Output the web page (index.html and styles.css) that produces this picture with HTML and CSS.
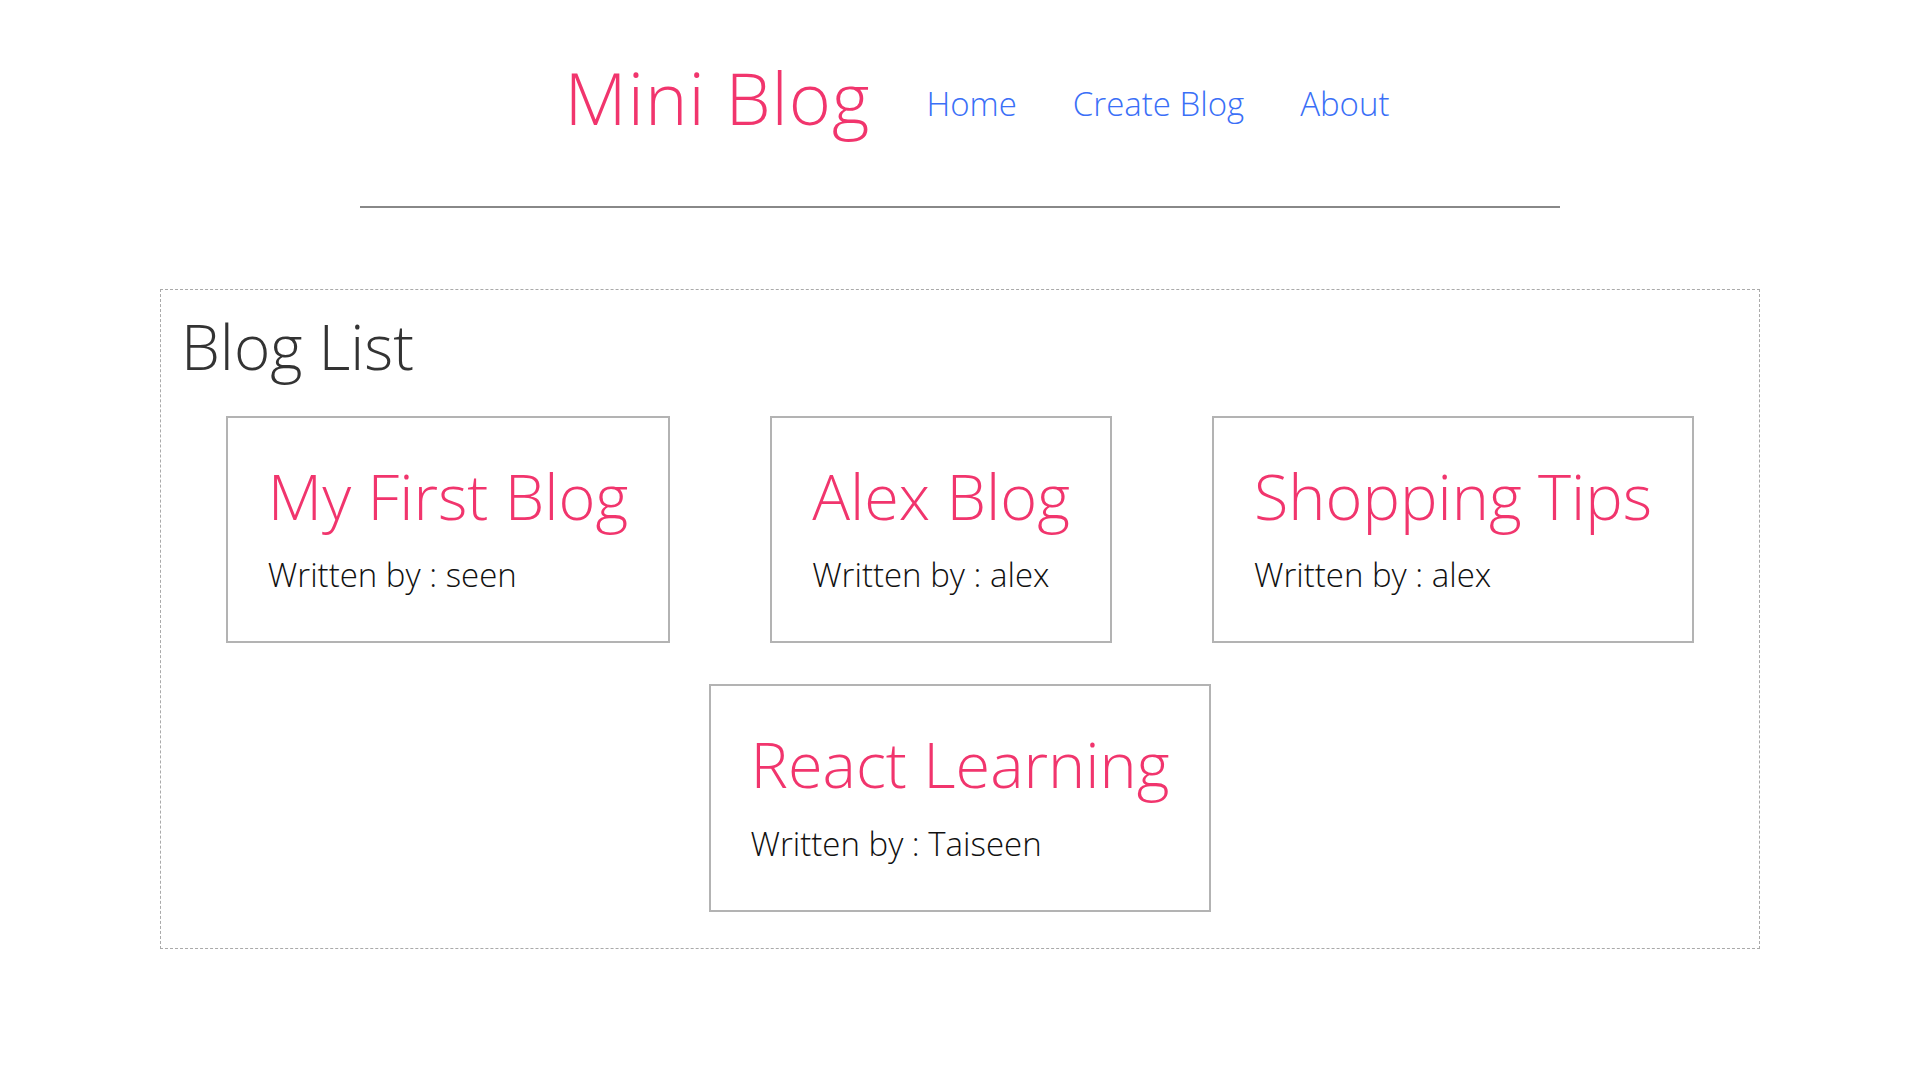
FILE: index.html
```html
<!DOCTYPE html>
<html lang="en">
<head>
<meta charset="utf-8">
<title>Mini Blog</title>
<link rel="stylesheet" href="styles.css">
</head>
<body>
  <nav class="navbar">
    <h1 class="brand">Mini Blog</h1>
    <div class="links">
      <a href="#">Home</a>
      <a href="#">Create Blog</a>
      <a href="#">About</a>
    </div>
  </nav>
  <main class="content">
    <h2 class="list-title">Blog List</h2>
    <div class="blog-grid">
      <div class="blog-preview">
        <h2>My First Blog</h2>
        <p>Written by : seen</p>
      </div>
      <div class="blog-preview">
        <h2>Alex Blog</h2>
        <p>Written by : alex</p>
      </div>
      <div class="blog-preview">
        <h2>Shopping Tips</h2>
        <p>Written by : alex</p>
      </div>
      <div class="blog-preview">
        <h2>React Learning</h2>
        <p>Written by : Taiseen</p>
      </div>
    </div>
  </main>
</body>
</html>
```
FILE: styles.css
```css
* {
  margin: 0;
  box-sizing: border-box;
}

body {
  margin: 0;
  font-family: "Open Sans", "Lato", sans-serif;
  font-weight: 300;
  color: #333;
  background: #fff;
}

.navbar {
  width: 1200px;
  height: 208px;
  margin: 0 auto;
  padding-left: 34px;
  display: flex;
  justify-content: center;
  align-items: center;
  border-bottom: 2px solid #888;
}

.brand {
  font-size: 72px;
  font-weight: 300;
  letter-spacing: 1px;
  color: #f1356d;
  margin-top: -12px;
}

.links {
  display: flex;
  gap: 56px;
  margin-left: 56px;
}

.links a {
  font-size: 33px;
  color: #3a6ff7;
  text-decoration: none;
}

.content {
  width: 1600px;
  margin: 81px auto 0;
  border: 1px dashed #aaa;
  padding: 18px 0 36px;
}

.list-title {
  font-size: 62px;
  font-weight: 300;
  color: #333;
  line-height: 1.24;
  padding-left: 20px;
}

.blog-grid {
  display: flex;
  flex-wrap: wrap;
  justify-content: center;
  row-gap: 41px;
  margin-top: 31px;
}

.blog-preview {
  border: 2px solid #b3b3b3;
  padding: 40px 40px 44px;
  margin: 0 50px;
}

.blog-preview h2 {
  font-size: 63px;
  font-weight: 300;
  color: #f1356d;
  line-height: 1.2;
}

.blog-preview p {
  font-size: 33px;
  color: #111;
  margin-top: 19px;
}
```
